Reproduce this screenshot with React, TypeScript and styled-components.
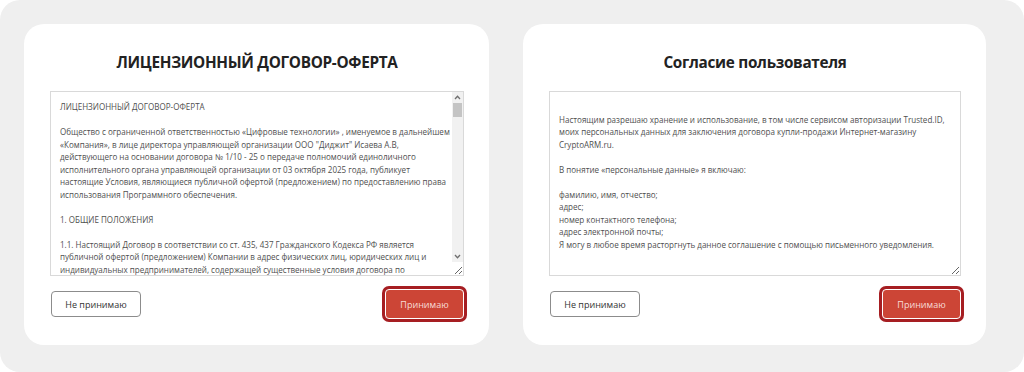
import React from 'react';
import styled, { createGlobalStyle } from 'styled-components';

const LICENSE_TEXT = `ЛИЦЕНЗИОННЫЙ ДОГОВОР-ОФЕРТА

Общество с ограниченной ответственностью «Цифровые технологии» , именуемое в дальнейшем
«Компания», в лице директора управляющей организации ООО "Диджит" Исаева А.В,
действующего на основании договора № 1/10 - 25 о передаче полномочий единоличного
исполнительного органа управляющей организации от 03 октября 2025 года, публикует
настоящие Условия, являющиеся публичной офертой (предложением) по предоставлению права
использования Программного обеспечения.

1. ОБЩИЕ ПОЛОЖЕНИЯ

1.1. Настоящий Договор в соответствии со ст. 435, 437 Гражданского Кодекса РФ является
публичной офертой (предложением) Компании в адрес физических лиц, юридических лиц и
индивидуальных предпринимателей, содержащей существенные условия договора по
предоставлению права использования Программного обеспечения на условиях простой
(неисключительной) лицензии.

1.2. Акцептом настоящей оферты является оплата Лицензиатом вознаграждения за право
использования Программного обеспечения либо совершение иных действий, прямо указанных
в настоящем Договоре.

1.3. Акцепт оферты означает полное и безоговорочное принятие Лицензиатом всех условий
настоящего Договора без каких-либо изъятий и ограничений.

2. ТЕРМИНЫ И ОПРЕДЕЛЕНИЯ

2.1. Программное обеспечение — программа для ЭВМ, права на которую принадлежат
Компании, включая все её обновления, дополнения и сопроводительную документацию.

2.2. Лицензиат — физическое лицо, юридическое лицо или индивидуальный предприниматель,
принявший условия настоящей оферты.

3. ПРЕДМЕТ ДОГОВОРА

3.1. Компания предоставляет Лицензиату право использования Программного обеспечения
на условиях простой (неисключительной) лицензии в пределах, установленных настоящим
Договором, а Лицензиат обязуется уплатить Компании вознаграждение.

4. ЗАКЛЮЧИТЕЛЬНЫЕ ПОЛОЖЕНИЯ

4.1. Настоящий Договор вступает в силу с момента акцепта и действует до полного
исполнения Сторонами своих обязательств.`;

const CONSENT_TEXT = `
Настоящим разрешаю хранение и использование, в том числе сервисом авторизации Trusted.ID,
моих персональных данных для заключения договора купли-продажи Интернет-магазину
CryptoARM.ru.

В понятие «персональные данные» я включаю:

фамилию, имя, отчество;
адрес;
номер контактного телефона;
адрес электронной почты;
Я могу в любое время расторгнуть данное соглашение с помощью письменного уведомления.`;

const GlobalStyle = createGlobalStyle`
  html, body {
    margin: 0;
    background: #ffffff;
    font-family: 'Open Sans', 'Noto Sans', sans-serif;
  }
  * {
    box-sizing: border-box;
  }
`;

const Backdrop = styled.div`
  width: 1024px;
  height: 372px;
  background: #efefef;
  border-radius: 20px;
  padding: 24px 0 0 24px;
  display: grid;
  grid-template-columns: 465px 463px;
  column-gap: 34px;
  align-items: start;
`;

const Card = styled.section`
  background: #ffffff;
  border-radius: 20px;
  padding: 27px 25px 26px 26px;
  display: flex;
  flex-direction: column;
`;

const Title = styled.h2`
  margin: 0 0 17px;
  font-size: 15.3px;
  line-height: 23px;
  font-weight: 700;
  letter-spacing: -0.3px;
  color: #222222;
  text-align: center;
`;

const DocFrame = styled.div`
  position: relative;
  height: 185px;
`;

const DocBox = styled.textarea<{ $scrollable: boolean }>`
  display: block;
  width: 100%;
  height: 100%;
  margin: 0;
  padding: 9px ${({ $scrollable }) => ($scrollable ? '13px' : '8px')} 7px 9px;
  border: 1px solid #d9d9d9;
  background: #ffffff;
  color: #4f4f4f;
  font-family: 'Open Sans', 'Noto Sans', sans-serif;
  font-size: 8.05px;
  line-height: 12.5px;
  white-space: pre;
  outline: none;
  overflow: hidden;
`;

const ScrollRail = styled.div`
  position: absolute;
  top: 1px;
  right: 1px;
  bottom: 14px;
  width: 11px;
  background: #f1f1f1;
  display: flex;
  flex-direction: column;
  align-items: center;
  pointer-events: none;
`;

const RailArrow = styled.div`
  height: 11px;
  width: 11px;
  display: flex;
  align-items: center;
  justify-content: center;
`;

const RailThumb = styled.div`
  width: 9px;
  height: 14px;
  background: #c4c4c4;
`;

const RailGap = styled.div`
  flex: 1;
`;

const Actions = styled.div`
  margin-top: 13px;
  height: 30px;
  display: flex;
  align-items: center;
  justify-content: space-between;
`;

const DeclineButton = styled.button`
  width: 90px;
  height: 26px;
  margin-left: 1px;
  border: 1.5px solid #8c8c8c;
  border-radius: 4px;
  background: #ffffff;
  color: #333333;
  font-family: 'Open Sans', 'Noto Sans', sans-serif;
  font-size: 9px;
  cursor: pointer;
`;

const AcceptButton = styled.button`
  width: 79px;
  height: 30px;
  border: 1px solid #ffffff;
  border-radius: 4px;
  background: #cc4536;
  box-shadow: 0 0 0 3px #a61e22;
  color: #f8dcd7;
  font-family: 'Open Sans', 'Noto Sans', sans-serif;
  font-size: 9px;
  cursor: pointer;
`;

function Chevron({ up }: { up?: boolean }) {
  return (
    <svg width="7" height="5" viewBox="0 0 7 5">
      <path
        d={up ? 'M1 4 L3.5 1.3 L6 4' : 'M1 1 L3.5 3.7 L6 1'}
        fill="none"
        stroke="#6f6f6f"
        strokeWidth="1.3"
      />
    </svg>
  );
}

type AgreementCardProps = {
  title: string;
  text: string;
  scrollable?: boolean;
};

function AgreementCard({ title, text, scrollable = false }: AgreementCardProps) {
  return (
    <Card>
      <Title>{title}</Title>
      <DocFrame>
        <DocBox readOnly wrap="off" defaultValue={text} $scrollable={scrollable} />
        {scrollable && (
          <ScrollRail>
            <RailArrow>
              <Chevron up />
            </RailArrow>
            <RailThumb />
            <RailGap />
            <RailArrow>
              <Chevron />
            </RailArrow>
          </ScrollRail>
        )}
      </DocFrame>
      <Actions>
        <DeclineButton>Не принимаю</DeclineButton>
        <AcceptButton>Принимаю</AcceptButton>
      </Actions>
    </Card>
  );
}

export default function App() {
  return (
    <>
      <GlobalStyle />
      <Backdrop>
        <AgreementCard title="ЛИЦЕНЗИОННЫЙ ДОГОВОР-ОФЕРТА" text={LICENSE_TEXT} scrollable />
        <AgreementCard title="Согласие пользователя" text={CONSENT_TEXT} />
      </Backdrop>
    </>
  );
}
